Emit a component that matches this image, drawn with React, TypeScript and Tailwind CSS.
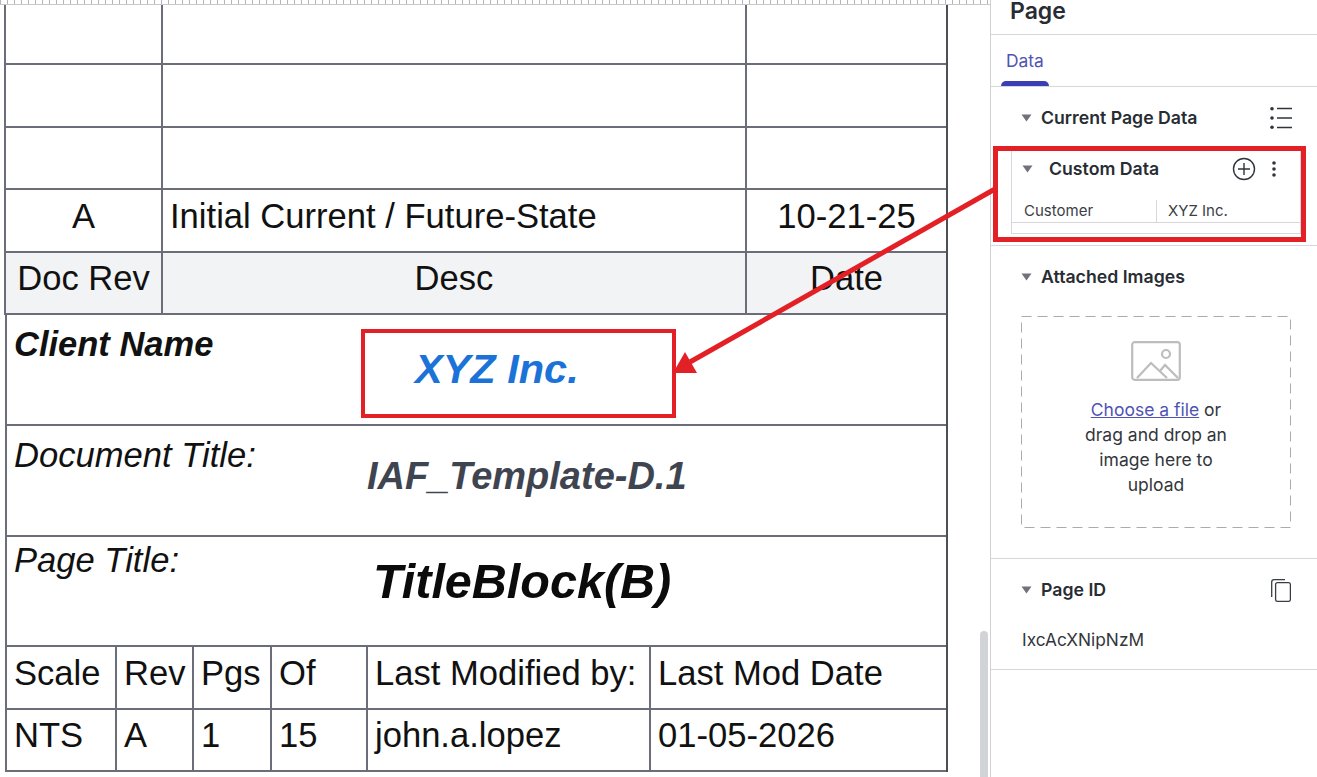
import React from 'react';

const SANS = "font-['Liberation_Sans',Arial,sans-serif]";
const UI = "font-['Inter','Noto_Sans',sans-serif]";

const Caret = () => (
  <svg width="11" height="8" viewBox="0 0 11 8" className="shrink-0">
    <path d="M0.5 0.5h10L5.5 7.5z" fill="#6f7278" />
  </svg>
);

const SectionTitle = ({ children, gap = 'gap-[9px]' }: { children: React.ReactNode; gap?: string }) => (
  <div className={`flex items-center ${gap}`}>
    <Caret />
    <span className="text-[17.7px] font-semibold leading-[20px] text-[#282c33]">{children}</span>
  </div>
);

const RevRow = ({ a = '', b = '', c = '', shaded = false, first = false }: { a?: string; b?: string; c?: string; shaded?: boolean; first?: boolean }) => (
  <div className={`grid grid-cols-[157px_584px_1fr] border-b-2 border-[#6b6e78] text-[34.6px] text-[#111] ${first ? 'h-[60px]' : 'h-[62.5px]'} ${shaded ? 'bg-[#f2f3f5]' : ''}`}>
    <div className="flex items-center justify-center border-r-2 border-[#6b6e78] pb-[7px]">{a}</div>
    <div className={`flex items-center border-r-2 border-[#6b6e78] pb-[7px] ${shaded ? 'justify-center' : 'pl-[7px]'}`}>{b}</div>
    <div className="flex items-center justify-center pb-[7px]">{c}</div>
  </div>
);

const FootRow = ({ cells }: { cells: string[] }) => (
  <div className="grid h-[62.5px] grid-cols-[110px_77px_78px_96px_283px_1fr] border-b-2 border-[#6b6e78] text-[34.6px] text-[#111]">
    {cells.map((cell, i) => (
      <div key={i} className={`flex items-center pb-[7px] pl-[7px] whitespace-nowrap ${i < 5 ? 'border-r-2 border-[#6b6e78]' : ''}`}>
        {cell}
      </div>
    ))}
  </div>
);

export default function App() {
  return (
    <div className="relative flex h-[777px] w-[1317px] overflow-hidden bg-white">
      {/* Canvas */}
      <div className={`relative h-full w-[990px] shrink-0 ${SANS}`}>
        <div className="h-[4px] bg-[repeating-linear-gradient(90deg,#b5b5b5_0,#b5b5b5_1px,transparent_1px,transparent_7px)]" />
        <div className="h-px bg-[#c9c9c9]" />

        <div className="ml-[4px] w-[944px] border-x-2 border-[#6b6e78] border-r-[#4d4f57]">
          <RevRow first />
          <RevRow />
          <RevRow />
          <RevRow a="A" b="Initial Current / Future-State" c="10-21-25" />
          <RevRow a="Doc Rev" b="Desc" c="Date" shaded />
        </div>

        <div className="ml-[5px] w-[943px] border-x-2 border-[#6b6e78] border-r-[#4d4f57]">
          <div className="flex h-[111px] border-b-2 border-[#6b6e78] pl-[7px]">
            <span className="mt-[9px] w-[401px] whitespace-nowrap text-[34.5px] font-bold italic leading-[40px] text-[#111]">Client Name</span>
            <span className="mt-[32px] whitespace-nowrap text-[41.5px] font-bold italic leading-[44px] text-[#1b73d8]">XYZ Inc.</span>
          </div>
          <div className="flex h-[111px] border-b-2 border-[#6b6e78] pl-[7px]">
            <span className="mt-[9px] w-[353px] whitespace-nowrap text-[34.6px] italic leading-[40px] text-[#111]">Document Title:</span>
            <span className="mt-[28px] whitespace-nowrap text-[38px] font-bold italic leading-[44px] text-[#3f4550]">IAF_Template-D.1</span>
          </div>
          <div className="flex h-[110px] border-b-2 border-[#6b6e78] pl-[7px]">
            <span className="mt-[3px] w-[359px] whitespace-nowrap text-[34.6px] italic leading-[40px] text-[#111]">Page Title:</span>
            <span className="mt-[18px] whitespace-nowrap text-[48.5px] font-bold italic leading-[52px] text-[#0b0b0b]">TitleBlock(B)</span>
          </div>
          <FootRow cells={['Scale', 'Rev', 'Pgs', 'Of', 'Last Modified by:', 'Last Mod Date']} />
          <FootRow cells={['NTS', 'A', '1', '15', 'john.a.lopez', '01-05-2026']} />
        </div>

        {/* scrollbar */}
        <div className="absolute left-[980px] top-[631px] h-[146px] w-[8px] rounded-t-full bg-[#d1d3d6]" />
      </div>

      {/* Right panel */}
      <aside className={`h-full flex-1 border-l border-[#cfd1d4] ${UI}`}>
        <div className="flex h-[35px] items-end border-b border-[#d5d7dc] pb-[12px] pl-[19px]">
          <span className="text-[23px] font-semibold leading-[22px] text-[#282c33]">Page</span>
        </div>
        <div className="relative flex h-[52px] items-center border-b border-[#d5d7dc] pl-[15px] pt-[1px]">
          <span className="text-[17.4px] text-[#4f53b3]">Data</span>
          <div className="absolute bottom-0 left-[10px] h-[5px] w-[48px] rounded-t-[5px] bg-[#3a3fb5]" />
        </div>

        <div className="flex h-[61px] items-center justify-between pl-[30px] pr-[24px]">
          <SectionTitle>Current Page Data</SectionTitle>
          <svg width="24" height="22" viewBox="0 0 24 22" fill="none" stroke="#30343b" strokeWidth="1.4">
            <path d="M8 1.5h15M8 11h15M8 20.5h15" />
            <g fill="#30343b" stroke="none">
              <circle cx="3" cy="1.8" r="1.8" />
              <circle cx="3" cy="11" r="1.8" />
              <circle cx="3" cy="20.2" r="1.8" />
            </g>
          </svg>
        </div>

        {/* Custom data */}
        <div className="h-[98px] border-b border-[#d5d7dc] pl-[20px]">
          <div className="h-[86px] w-[290px] border-x border-b border-[#d5d7dc]">
            <div className="flex h-[41px] items-center justify-between pl-[10px] pr-[24px]">
              <SectionTitle gap="gap-[16px]">Custom Data</SectionTitle>
              <div className="flex items-center gap-[16px]">
                <svg width="24" height="24" viewBox="0 0 24 24" fill="none" stroke="#30343b" strokeWidth="1.4">
                  <circle cx="12" cy="12" r="10.5" />
                  <path d="M12 6v12M6 12h12" />
                </svg>
                <svg width="4" height="18" viewBox="0 0 4 18" fill="#30343b">
                  <circle cx="2" cy="3" r="1.8" />
                  <circle cx="2" cy="9" r="1.8" />
                  <circle cx="2" cy="15" r="1.8" />
                </svg>
              </div>
            </div>
            <div className="mt-[9px] grid h-[25px] grid-cols-[145px_1fr] border-b border-[#d5d7dc] pt-[2px] text-[15px] text-[#3b3f46]">
              <div className="flex items-center border-r border-[#d5d7dc] pl-[12px]">Customer</div>
              <div className="flex items-center pl-[11px]">XYZ Inc.</div>
            </div>
          </div>
        </div>

        {/* Attached images */}
        <div className="h-[313px] border-b border-[#d5d7dc] pl-[30px] pt-[21px]">
          <SectionTitle>Attached Images</SectionTitle>
          <div className="relative mt-[29px] flex h-[212px] w-[270px] flex-col items-center pt-[25px]">
            <svg className="absolute inset-0" width="270" height="212" fill="none">
              <rect x="0.5" y="0.5" width="269" height="211" stroke="#a9abae" strokeDasharray="10 6" />
            </svg>
            <svg width="50" height="40" viewBox="0 0 50 40" fill="none" stroke="#bdbdbd" strokeWidth="2.2">
              <rect x="1.2" y="1.2" width="47.6" height="37.6" rx="2.5" />
              <circle cx="35" cy="13" r="4" />
              <path d="M6 37l14-15 16 15M29 30l5-6 13 13" />
            </svg>
            <div className="mt-[16px] w-[160px] text-center text-[17.5px] leading-[25px] text-[#33363c]">
              <a className="text-[#4f53b3] underline">Choose a file</a> or drag and drop an image here to upload
            </div>
          </div>
        </div>

        {/* Page id */}
        <div className="h-[111px] border-b border-[#d5d7dc]">
          <div className="flex h-[62px] items-center justify-between pl-[30px] pr-[26px]">
            <SectionTitle>Page ID</SectionTitle>
            <svg width="20" height="23" viewBox="0 0 20 23" fill="none" stroke="#3a3d44" strokeWidth="1.3">
              <rect x="4.6" y="3.6" width="14.8" height="18.8" rx="2" />
              <path d="M14 0.7H3Q0.7 0.7 0.7 3V18" />
            </svg>
          </div>
          <div className="mt-[9px] pl-[31px] text-[17.3px] leading-[20px] text-[#33363c]">IxcAcXNipNzM</div>
        </div>
      </aside>

      {/* Annotations */}
      <div className="absolute left-[361px] top-[329px] h-[89px] w-[315px] border-4 border-[#e32025]" />
      <div className="absolute left-[993px] top-[146px] h-[96px] w-[313px] border-[5px] border-[#e32025]" />
      <svg className="pointer-events-none absolute left-0 top-0" width="1317" height="777" fill="none">
        <path d="M995 189L690 362" stroke="#e32025" strokeWidth="5" />
        <path d="M673 373L685 352L697 373z" fill="#e32025" />
      </svg>
    </div>
  );
}
